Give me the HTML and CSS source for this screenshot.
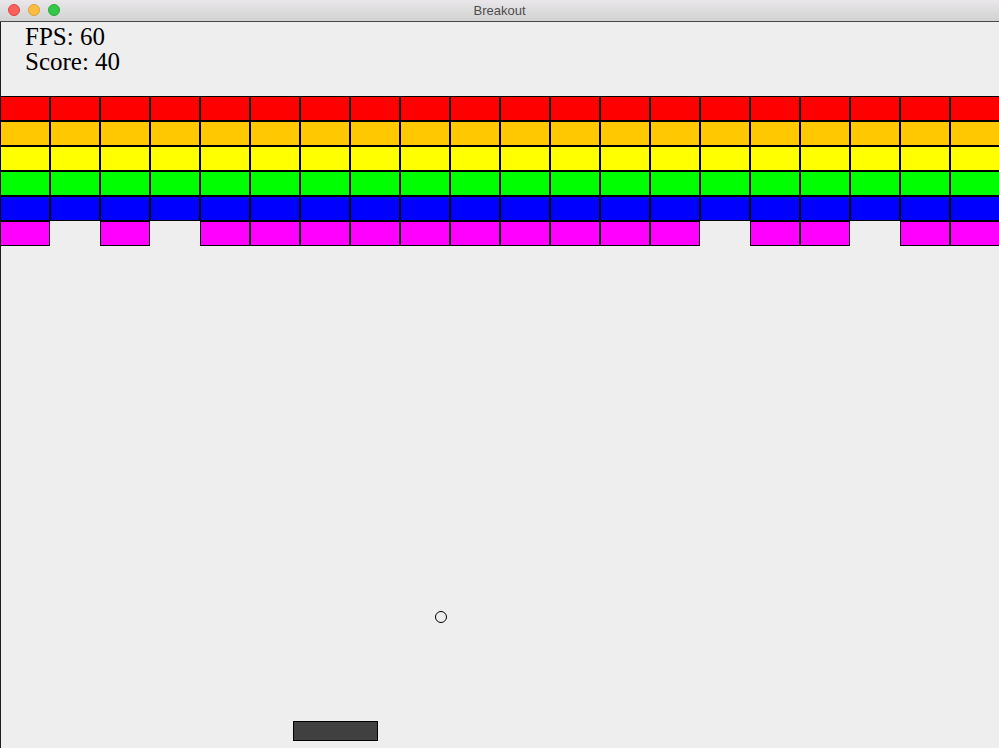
FILE: index.html
```html
<!DOCTYPE html>
<html>
<head>
<meta charset="utf-8">
<title>Breakout</title>
<link rel="stylesheet" href="styles.css">
</head>
<body>
<div class="window">
  <div class="titlebar">
    <div class="lights">
      <span class="light red"></span>
      <span class="light yellow"></span>
      <span class="light green"></span>
    </div>
    <div class="title">Breakout</div>
  </div>
  <div class="game">
    <div class="hud">
      <div class="hud-line">FPS: 60</div>
      <div class="hud-line">Score: 40</div>
    </div>
    <div class="bricks">
      <div class="brick red"></div><div class="brick red"></div><div class="brick red"></div><div class="brick red"></div><div class="brick red"></div><div class="brick red"></div><div class="brick red"></div><div class="brick red"></div><div class="brick red"></div><div class="brick red"></div><div class="brick red"></div><div class="brick red"></div><div class="brick red"></div><div class="brick red"></div><div class="brick red"></div><div class="brick red"></div><div class="brick red"></div><div class="brick red"></div><div class="brick red"></div><div class="brick red"></div>
      <div class="brick orange"></div><div class="brick orange"></div><div class="brick orange"></div><div class="brick orange"></div><div class="brick orange"></div><div class="brick orange"></div><div class="brick orange"></div><div class="brick orange"></div><div class="brick orange"></div><div class="brick orange"></div><div class="brick orange"></div><div class="brick orange"></div><div class="brick orange"></div><div class="brick orange"></div><div class="brick orange"></div><div class="brick orange"></div><div class="brick orange"></div><div class="brick orange"></div><div class="brick orange"></div><div class="brick orange"></div>
      <div class="brick yellow"></div><div class="brick yellow"></div><div class="brick yellow"></div><div class="brick yellow"></div><div class="brick yellow"></div><div class="brick yellow"></div><div class="brick yellow"></div><div class="brick yellow"></div><div class="brick yellow"></div><div class="brick yellow"></div><div class="brick yellow"></div><div class="brick yellow"></div><div class="brick yellow"></div><div class="brick yellow"></div><div class="brick yellow"></div><div class="brick yellow"></div><div class="brick yellow"></div><div class="brick yellow"></div><div class="brick yellow"></div><div class="brick yellow"></div>
      <div class="brick green"></div><div class="brick green"></div><div class="brick green"></div><div class="brick green"></div><div class="brick green"></div><div class="brick green"></div><div class="brick green"></div><div class="brick green"></div><div class="brick green"></div><div class="brick green"></div><div class="brick green"></div><div class="brick green"></div><div class="brick green"></div><div class="brick green"></div><div class="brick green"></div><div class="brick green"></div><div class="brick green"></div><div class="brick green"></div><div class="brick green"></div><div class="brick green"></div>
      <div class="brick blue"></div><div class="brick blue"></div><div class="brick blue"></div><div class="brick blue"></div><div class="brick blue"></div><div class="brick blue"></div><div class="brick blue"></div><div class="brick blue"></div><div class="brick blue"></div><div class="brick blue"></div><div class="brick blue"></div><div class="brick blue"></div><div class="brick blue"></div><div class="brick blue"></div><div class="brick blue"></div><div class="brick blue"></div><div class="brick blue"></div><div class="brick blue"></div><div class="brick blue"></div><div class="brick blue"></div>
      <div class="brick magenta"></div><div class="brick empty"></div><div class="brick magenta"></div><div class="brick empty"></div><div class="brick magenta"></div><div class="brick magenta"></div><div class="brick magenta"></div><div class="brick magenta"></div><div class="brick magenta"></div><div class="brick magenta"></div><div class="brick magenta"></div><div class="brick magenta"></div><div class="brick magenta"></div><div class="brick magenta"></div><div class="brick empty"></div><div class="brick magenta"></div><div class="brick magenta"></div><div class="brick empty"></div><div class="brick magenta"></div><div class="brick magenta"></div>
    </div>
    <div class="ball"></div>
    <div class="paddle"></div>
  </div>
</div>
</body>
</html>
```
FILE: styles.css
```css
html, body {
  margin: 0;
  padding: 0;
  width: 999px;
  height: 748px;
  overflow: hidden;
  background: #eeeeee;
}

.window {
  display: flex;
  flex-direction: column;
  width: 999px;
  height: 748px;
}

.titlebar {
  position: relative;
  height: 21px;
  flex: 0 0 21px;
  background: linear-gradient(to bottom, #e9e7e9 0%, #d2d2d2 100%);
  border-bottom: 1px solid #4a4a4a;
  display: flex;
  align-items: center;
  justify-content: center;
}

.lights {
  position: absolute;
  left: 8px;
  top: 4px;
  display: flex;
  gap: 8px;
}

.light {
  display: block;
  width: 12px;
  height: 12px;
  border-radius: 50%;
  box-sizing: border-box;
}

.light.red {
  background: #fc605c;
  border: 1px solid #e0443e;
}

.light.yellow {
  background: #fdbc40;
  border: 1px solid #dea236;
}

.light.green {
  background: #34c84a;
  border: 1px solid #27aa35;
}

.title {
  font-family: "Liberation Sans", Arial, sans-serif;
  font-size: 13px;
  color: #4d4d4d;
  line-height: 21px;
  margin-top: 0px;
}

.game {
  position: relative;
  flex: 1 1 auto;
  background: linear-gradient(to right, #1e1e1e 1px, #eeeeee 1px);
}

.hud {
  padding: 2px 0 0 25px;
  font-family: "Liberation Serif", "Times New Roman", serif;
  font-size: 25px;
  line-height: 25px;
  color: #000;
}

.bricks {
  margin-top: 22px;
  display: grid;
  grid-template-columns: repeat(20, 50px);
  grid-auto-rows: 25px;
  width: 1000px;
}

.brick {
  box-sizing: border-box;
  border: 1px solid #000;
}

.brick.red { background: #ff0000; }
.brick.orange { background: #ffc800; }
.brick.yellow { background: #ffff00; }
.brick.green { background: #00ff00; }
.brick.blue { background: #0000ff; }
.brick.magenta { background: #ff00ff; }
.brick.empty { border: none; background: transparent; }

.ball {
  position: absolute;
  left: 435px;
  top: 589px;
  width: 12px;
  height: 12px;
  box-sizing: border-box;
  border: 1px solid #000;
  border-radius: 50%;
}

.paddle {
  position: absolute;
  left: 293px;
  top: 699px;
  width: 85px;
  height: 20px;
  box-sizing: border-box;
  background: #404040;
  border: 1px solid #000;
}
```
